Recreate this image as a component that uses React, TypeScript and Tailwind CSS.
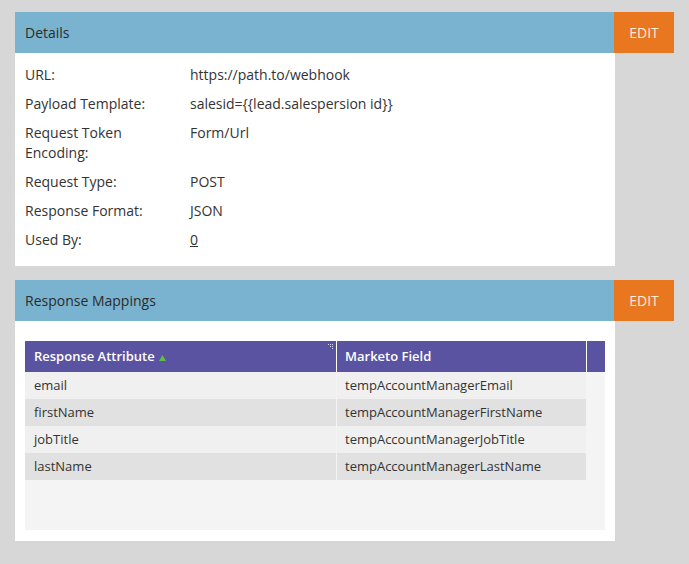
import React from 'react';

const details = [
  { label: 'URL:', value: 'https://path.to/webhook' },
  { label: 'Payload Template:', value: 'salesid={{lead.salespersion id}}' },
  { label: 'Request Token Encoding:', value: 'Form/Url' },
  { label: 'Request Type:', value: 'POST' },
  { label: 'Response Format:', value: 'JSON' },
];

const mappings = [
  ['email', 'tempAccountManagerEmail'],
  ['firstName', 'tempAccountManagerFirstName'],
  ['jobTitle', 'tempAccountManagerJobTitle'],
  ['lastName', 'tempAccountManagerLastName'],
];

const PanelHeader = ({ title }: { title: string }) => (
  <div className="flex h-[41px]">
    <div className="flex w-[600px] items-center bg-[#7ab3cf] pl-[10px] text-[14px] text-[#2b2b2b]">
      {title}
    </div>
    <button className="flex w-[60px] items-center justify-center bg-[#e8771f] text-[14px] text-[#fdeedd]">
      EDIT
    </button>
  </div>
);

const App = () => {
  return (
    <div
      className="min-h-[564px] bg-[#d7d7d7] px-[15px] pt-[12px]"
      style={{ fontFamily: '"Open Sans", sans-serif' }}
    >
      {/* Details */}
      <PanelHeader title="Details" />
      <div className="w-[600px] bg-white pl-[10px] pt-[12px] pb-[16px] text-[14px] leading-[20px] text-[#333]">
        <div className="flex flex-col gap-[9px]">
          {details.map(d => (
            <div key={d.label} className="grid grid-cols-[165px_1fr]">
              <div className="pr-[25px]">{d.label}</div>
              <div>{d.value}</div>
            </div>
          ))}
          <div className="grid grid-cols-[165px_1fr]">
            <div>Used By:</div>
            <div>
              <span className="underline">0</span>
            </div>
          </div>
        </div>
      </div>

      {/* Response Mappings */}
      <div className="mt-[14px]">
        <PanelHeader title="Response Mappings" />
        <div className="w-[600px] bg-white px-[10px] pt-[20px] pb-[11px]">
          <div className="h-[189px] bg-[#f4f4f4] text-[13px] text-[#333]">
            <div className="flex h-[31px] bg-[#5a53a1] text-white">
              <div className="relative flex w-[311px] items-center pl-[9px] font-semibold">
                Response Attribute
                <svg className="ml-[4px] mt-[2px]" width="7" height="6" viewBox="0 0 7 6">
                  <path d="M3.5 0 L7 6 L0 6 Z" fill="#5fbf3f" />
                </svg>
                <svg className="absolute right-[3px] top-[3px]" width="8" height="8" viewBox="0 0 8 8">
                  <g fill="#d8d6ee">
                    <rect x="3" y="0" width="1" height="1" />
                    <rect x="5" y="0" width="1" height="1" />
                    <rect x="7" y="0" width="1" height="1" />
                    <rect x="5" y="2" width="1" height="1" />
                    <rect x="7" y="2" width="1" height="1" />
                    <rect x="7" y="4" width="1" height="1" />
                  </g>
                </svg>
              </div>
              <div className="w-px bg-white" />
              <div className="flex w-[249px] items-center pl-[8px] font-semibold">Marketo Field</div>
              <div className="w-px bg-white" />
              <div className="flex-1" />
            </div>
            {mappings.map(([a, b], i) => (
              <div
                key={a}
                className={`flex h-[27px] w-[561px] items-center ${i % 2 === 0 ? 'bg-[#f0f0f0]' : 'bg-[#e1e1e1]'}`}
              >
                <div className="w-[311px] pl-[9px]">{a}</div>
                <div className="h-full w-px bg-[#f4f4f4]" />
                <div className="pl-[8px]">{b}</div>
              </div>
            ))}
          </div>
        </div>
      </div>
    </div>
  );
};

export default App;
